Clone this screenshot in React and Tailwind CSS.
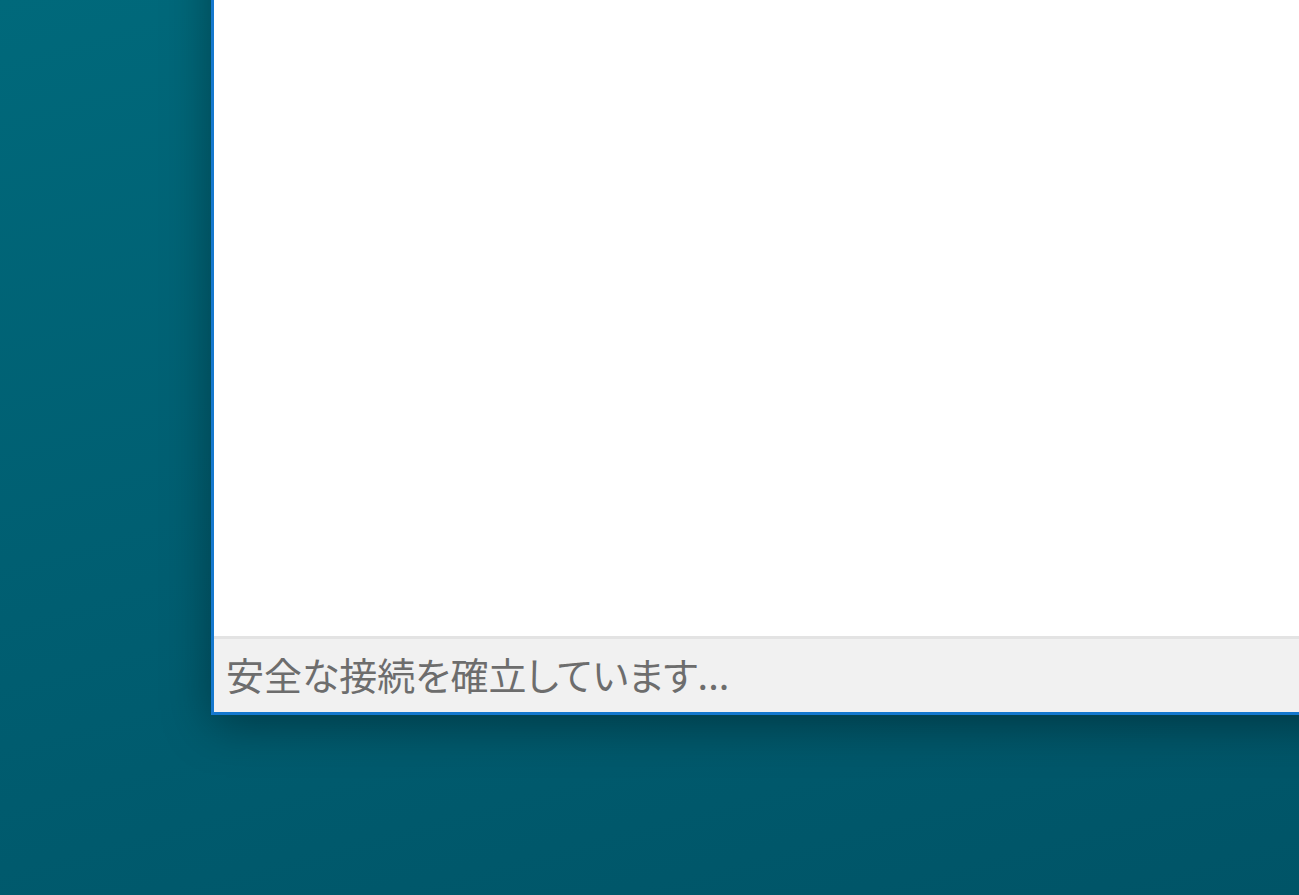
function StatusBar({ message }) {
  return (
    <footer className="flex h-19 items-center border-t-3 border-[#e3e3e3] bg-[#f1f1f1] px-3 pb-1">
      <p
        role="status"
        className="font-['Noto_Sans_CJK_JP','Liberation_Sans',sans-serif] text-[38px] leading-none whitespace-nowrap text-[#6d6d6d] [font-feature-settings:'palt']"
      >
        {message}
      </p>
    </footer>
  );
}

function BrowserWindow() {
  return (
    <section className="-mt-16 -mr-16 flex flex-1 flex-col border-b-3 border-l-3 border-[#1478ce] bg-white shadow-[0_10px_44px_rgba(0,0,0,0.36)]">
      <main className="flex-1" />
      <StatusBar message="安全な接続を確立しています..." />
    </section>
  );
}

export default function App() {
  return (
    <div
      lang="ja"
      className="flex min-h-screen flex-col overflow-hidden bg-linear-165 from-[#00697b] via-[#005e71] to-[#005467] pb-45 pl-[211px]"
    >
      <BrowserWindow />
    </div>
  );
}
